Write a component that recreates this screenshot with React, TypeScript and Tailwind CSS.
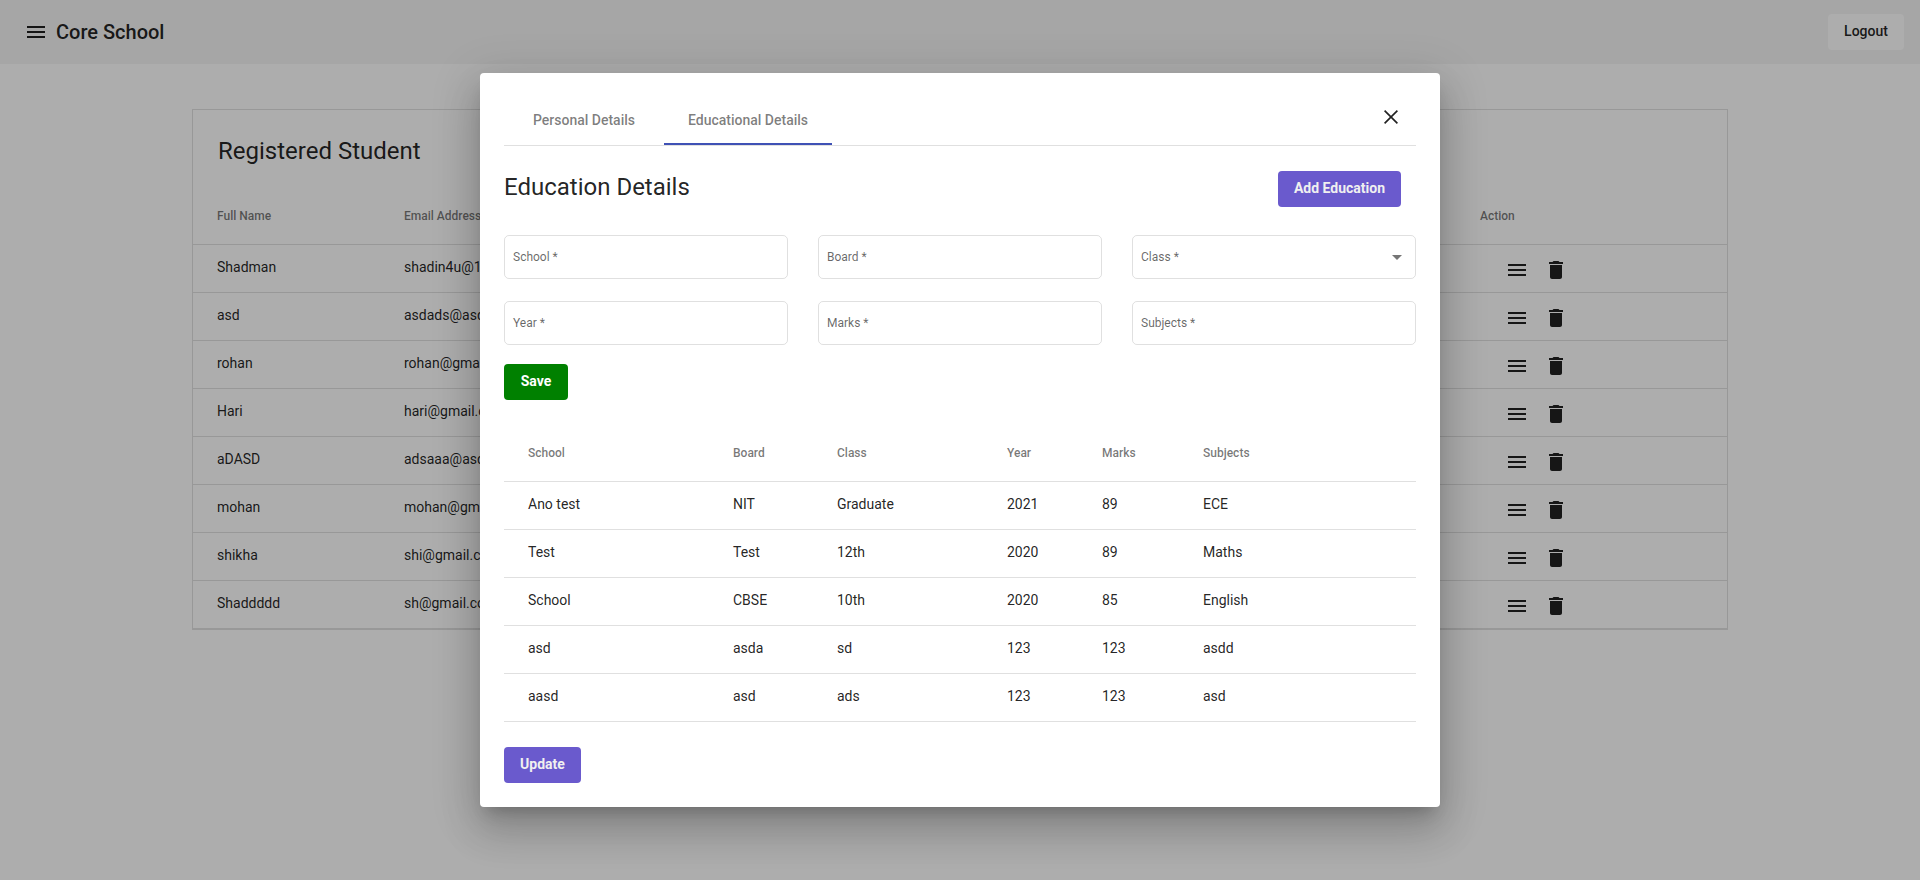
import React from "react";

const students = [
  ["Shadman", "shadin4u@163.com"],
  ["asd", "asdads@asd.com"],
  ["rohan", "rohan@gmail.com"],
  ["Hari", "hari@gmail.com"],
  ["aDASD", "adsaaa@asd.com"],
  ["mohan", "mohan@gmail.com"],
  ["shikha", "shi@gmail.com"],
  ["Shaddddd", "sh@gmail.com"],
];

const education = [
  ["Ano test", "NIT", "Graduate", "2021", "89", "ECE"],
  ["Test", "Test", "12th", "2020", "89", "Maths"],
  ["School", "CBSE", "10th", "2020", "85", "English"],
  ["asd", "asda", "sd", "123", "123", "asdd"],
  ["aasd", "asd", "ads", "123", "123", "asd"],
];

const columns = ["School", "Board", "Class", "Year", "Marks", "Subjects"];
const fields = ["School", "Board", "Class", "Year", "Marks", "Subjects"];

const gridCols = "grid grid-cols-[205px_104px_170px_95px_101px_1fr] pl-6";

function MenuIcon() {
  return (
    <svg className="size-6 shrink-0" viewBox="0 0 24 24" fill="currentColor">
      <path d="M3 18h18v-2H3v2zm0-5h18v-2H3v2zm0-7v2h18V6H3z" />
    </svg>
  );
}

function DeleteIcon() {
  return (
    <svg className="size-6 shrink-0" viewBox="0 0 24 24" fill="currentColor">
      <path d="M6 19c0 1.1.9 2 2 2h8c1.1 0 2-.9 2-2V7H6v12zM19 4h-3.5l-1-1h-5l-1 1H5v2h14V4z" />
    </svg>
  );
}

function CloseIcon() {
  return (
    <svg className="size-6" viewBox="0 0 24 24" fill="none" stroke="currentColor" strokeWidth="1.65">
      <path d="M5.6 5.6l12.8 12.8M18.4 5.6L5.6 18.4" />
    </svg>
  );
}

function Page() {
  return (
    <div className="h-full bg-white">
      <header className="flex h-16 items-center bg-[#f5f5f5] pr-4 pl-6">
        <MenuIcon />
        <h1 className="ml-2 text-[20px] leading-8 font-medium">Core School</h1>
        <button className="ml-auto h-9 w-[76px] rounded bg-white pb-0.5 text-sm font-medium">
          Logout
        </button>
      </header>
      <main className="mx-auto mt-[45px] w-[1536px] border border-black/12">
        <h2 className="h-[78px] pt-[25px] pl-[25px] text-[24px] leading-8">Registered Student</h2>
        <div className="flex h-[57px] items-center border-b border-black/12 pb-px pl-6 text-xs font-medium text-black/54">
          <span className="w-[187px]">Full Name</span>
          <span className="w-[1076px]">Email Address</span>
          <span>Action</span>
        </div>
        {students.map(([name, email]) => (
          <div key={name} className="flex h-12 border-b border-black/12 pl-6 text-sm">
            <span className="w-[187px] pt-3">{name}</span>
            <span className="w-[1101px] pt-3">{email}</span>
            <span className="flex gap-[15px] pt-[13px]">
              <MenuIcon />
              <DeleteIcon />
            </span>
          </div>
        ))}
      </main>
    </div>
  );
}

function EducationDialog() {
  return (
    <section className="h-[734px] w-[960px] rounded bg-white px-6 pt-6 shadow-[0_11px_15px_-7px_rgba(0,0,0,0.2),0_24px_38px_3px_rgba(0,0,0,0.14),0_9px_46px_8px_rgba(0,0,0,0.12)]">
      <nav className="flex h-[49px] border-b border-black/12 text-sm font-medium text-black/52">
        <button className="h-12 w-40 pb-0.5">Personal Details</button>
        <button className="h-12 w-[168px] border-b-2 border-[#3f51b5]">
          Educational Details
        </button>
        <button className="mt-2 mr-[13px] ml-auto size-6 text-black/87">
          <CloseIcon />
        </button>
      </nav>
      <div className="flex justify-between pt-[25px] pr-[15px]">
        <h2 className="text-[24px] leading-8">Education Details</h2>
        <button className="h-9 w-[123px] rounded bg-[#6a5acd] pb-0.5 text-sm font-bold text-[#f0f0f0]">
          Add Education
        </button>
      </div>
      <div className="mt-7 grid grid-cols-3 gap-x-[30px] gap-y-[22px] text-xs text-black/60">
        {fields.map((field) => (
          <div
            key={field}
            className="flex h-11 items-center justify-between rounded-[5px] border border-black/12 pr-[13px] pl-2"
          >
            <span>{field} *</span>
            {field === "Class" && (
              <svg className="h-[5px] w-2.5" viewBox="0 0 10 5">
                <path d="M0 0h10L5 5z" fill="#757575" />
              </svg>
            )}
          </div>
        ))}
      </div>
      <button className="mt-[19px] block h-9 w-16 rounded bg-[green] pb-0.5 text-sm font-bold text-white">
        Save
      </button>
      <div className="mt-[25px]">
        <div className={`${gridCols} h-[57px] items-center border-b border-black/12 pb-px text-xs font-medium text-black/54`}>
          {columns.map((column) => (
            <span key={column}>{column}</span>
          ))}
        </div>
        {education.map((row) => (
          <div key={row[0]} className={`${gridCols} h-12 items-start border-b border-black/12 pt-3 text-sm`}>
            {row.map((value, i) => (
              <span key={i}>{value}</span>
            ))}
          </div>
        ))}
      </div>
      <button className="mt-[25px] block h-9 w-[77px] rounded bg-[#6a5acd] pb-0.5 text-sm font-bold text-[#f0f0f0]">
        Update
      </button>
    </section>
  );
}

export default function App() {
  return (
    <div className="relative h-[880px] w-full overflow-hidden font-[Roboto,sans-serif] text-black/87">
      <Page />
      <div className="absolute inset-0 flex items-center justify-center bg-black/32">
        <EducationDialog />
      </div>
    </div>
  );
}
